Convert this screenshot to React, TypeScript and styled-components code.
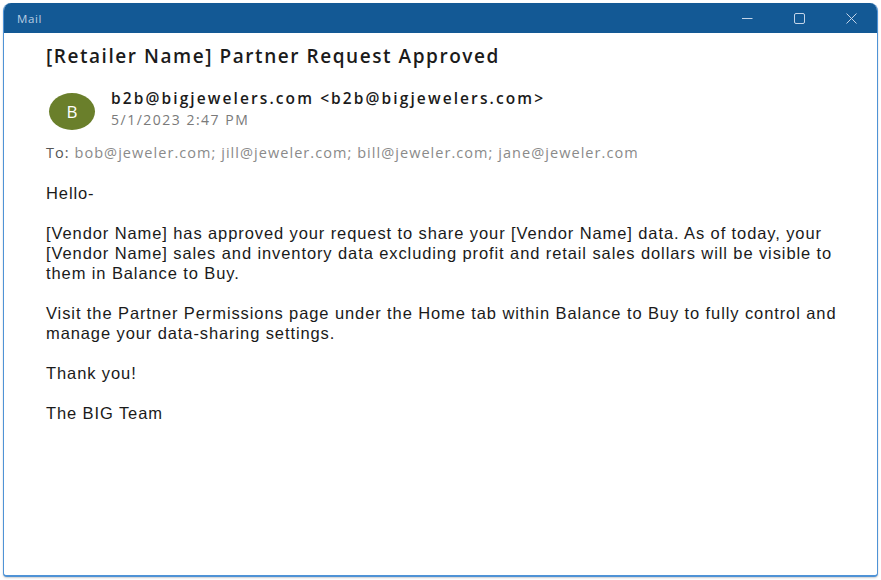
import styled, { createGlobalStyle } from "styled-components";

const GlobalStyle = createGlobalStyle`
  html, body {
    margin: 0;
    padding: 0;
    background: #ffffff;
  }
  * {
    box-sizing: border-box;
  }
`;

const Page = styled.div`
  width: 881px;
  height: 580px;
  padding: 3px 3px 3px 3px;
`;

const Window = styled.div`
  height: 100%;
  display: flex;
  flex-direction: column;
  border: 1px solid #4f93d6;
  border-bottom-width: 2px;
  border-top: none;
  border-radius: 8px 8px 4px 4px;
  overflow: hidden;
  box-shadow: 0 1px 2px rgba(0, 0, 0, 0.2);
  background: #ffffff;
`;

const TitleBar = styled.div`
  height: 30px;
  flex-shrink: 0;
  display: flex;
  align-items: center;
  background: #135995;
  font-family: "Open Sans", "Noto Sans", sans-serif;
`;

const TitleText = styled.div`
  flex: 1;
  padding-left: 13px;
  font-size: 11.5px;
  letter-spacing: 0.6px;
  color: #b9cde3;
`;

const TitleButton = styled.div`
  width: 52px;
  height: 30px;
  display: flex;
  align-items: center;
  justify-content: center;
  color: #c3d4e8;
`;

const Content = styled.div`
  flex: 1;
  padding: 10px 0 0 42px;
`;

const Subject = styled.h1`
  margin: 0;
  font-family: "Open Sans", "Noto Sans", sans-serif;
  font-weight: 600;
  font-size: 19px;
  letter-spacing: 1.55px;
  line-height: 26px;
  color: #1b1b1b;
`;

const SenderRow = styled.div`
  display: flex;
  align-items: flex-start;
  margin-top: 19px;
  gap: 16px;
  font-family: "Open Sans", "Noto Sans", sans-serif;
`;

const Avatar = styled.div`
  width: 46px;
  height: 37px;
  margin-top: 5px;
  margin-left: 3px;
  border-radius: 50%;
  background: #6a7f2b;
  color: #ffffff;
  display: flex;
  align-items: center;
  justify-content: center;
  font-size: 17px;
`;

const SenderInfo = styled.div`
  display: flex;
  flex-direction: column;
`;

const SenderName = styled.div`
  font-weight: 600;
  font-size: 15.5px;
  letter-spacing: 2.1px;
  line-height: 21.5px;
  color: #1b1b1b;
`;

const SentDate = styled.div`
  font-size: 14px;
  letter-spacing: 1.5px;
  line-height: 19.5px;
  color: #7a7a7a;
`;

const Recipients = styled.div`
  margin-top: 13px;
  font-family: "Open Sans", "Noto Sans", sans-serif;
  font-size: 14.5px;
  letter-spacing: 1.05px;
  line-height: 20px;
  color: #8a8a8a;
`;

const ToLabel = styled.span`
  color: #555555;
`;

const Body = styled.div`
  margin-top: 20px;
  font-family: "Liberation Sans", Arial, sans-serif;
  font-size: 16.5px;
  letter-spacing: 0.9px;
  line-height: 20px;
  color: #1a1a1a;
`;

const Paragraph = styled.p`
  margin: 0 0 20px 0;
  white-space: nowrap;
`;

const MinimizeIcon = () => (
  <svg width="11" height="11" viewBox="0 0 11 11">
    <path d="M0 5.5h10.5" stroke="currentColor" strokeWidth="1" fill="none" />
  </svg>
);

const MaximizeIcon = () => (
  <svg width="11" height="11" viewBox="0 0 11 11">
    <rect x="0.5" y="0.5" width="10" height="10" rx="1.5" stroke="currentColor" strokeWidth="1" fill="none" />
  </svg>
);

const CloseIcon = () => (
  <svg width="11" height="11" viewBox="0 0 11 11">
    <path d="M0.5 0.5l10 10M10.5 0.5l-10 10" stroke="currentColor" strokeWidth="1" fill="none" />
  </svg>
);

const App = () => {
  return (
    <>
      <GlobalStyle />
      <Page>
        <Window>
          <TitleBar>
            <TitleText>Mail</TitleText>
            <TitleButton>
              <MinimizeIcon />
            </TitleButton>
            <TitleButton>
              <MaximizeIcon />
            </TitleButton>
            <TitleButton>
              <CloseIcon />
            </TitleButton>
          </TitleBar>
          <Content>
            <Subject>[Retailer Name] Partner Request Approved</Subject>
            <SenderRow>
              <Avatar>B</Avatar>
              <SenderInfo>
                <SenderName>b2b@bigjewelers.com &lt;b2b@bigjewelers.com&gt;</SenderName>
                <SentDate>5/1/2023 2:47 PM</SentDate>
              </SenderInfo>
            </SenderRow>
            <Recipients>
              <ToLabel>To: </ToLabel>
              bob@jeweler.com; jill@jeweler.com; bill@jeweler.com; jane@jeweler.com
            </Recipients>
            <Body>
              <Paragraph>Hello-</Paragraph>
              <Paragraph>
                [Vendor Name] has approved your request to share your [Vendor Name] data. As of today, your
                <br />
                [Vendor Name] sales and inventory data excluding profit and retail sales dollars will be visible to
                <br />
                them in Balance to Buy.
              </Paragraph>
              <Paragraph>
                Visit the Partner Permissions page under the Home tab within Balance to Buy to fully control and
                <br />
                manage your data-sharing settings.
              </Paragraph>
              <Paragraph>Thank you!</Paragraph>
              <Paragraph>The BIG Team</Paragraph>
            </Body>
          </Content>
        </Window>
      </Page>
    </>
  );
};

export default App;
